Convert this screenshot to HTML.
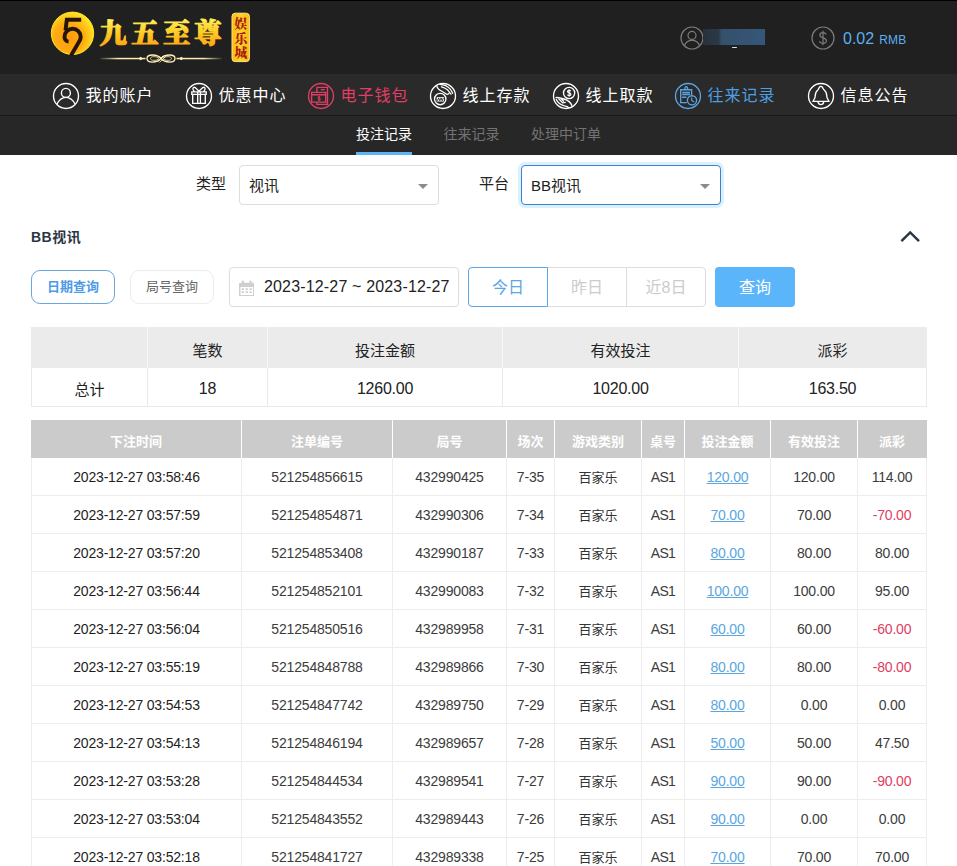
<!DOCTYPE html>
<html lang="zh-CN">
<head>
<meta charset="utf-8">
<title>投注记录</title>
<style>
*{box-sizing:border-box;margin:0;padding:0}
html,body{width:957px;height:866px;overflow:hidden;background:#fff}
body{position:relative;font-family:"Liberation Sans","Noto Sans CJK SC",sans-serif;color:#333;font-size:14px}
a{text-decoration:underline}
/* top bar */
.top{position:absolute;left:0;top:0;width:957px;height:74px;background:#202020;box-shadow:inset 0 1px 0 #000}
.logo{position:absolute;left:48px;top:7px;width:210px;height:60px}
.uicon{position:absolute;top:26px;width:24px;height:24px}
.mask{position:absolute;left:703px;top:29px;width:62px;height:16px;background:linear-gradient(90deg,#26313c 0,#2b3947 25%,#34506b 30%,#36577a 100%)}
.mask i{position:absolute;left:29px;top:17.5px;width:5px;height:1.5px;background:#cfe3f5;border-radius:1px}
.bal{position:absolute;left:843px;top:28px;height:22px;line-height:22px;color:#5bb0ee;font-size:16px;white-space:nowrap}
.bal small{font-size:12px;margin-left:5px;letter-spacing:.2px}
/* nav */
.nav{position:absolute;left:0;top:74px;width:957px;height:42px;background:#2a2a2a;border-bottom:1px solid #191919}
.ni{position:absolute;top:0;height:41px;line-height:41px;color:#fff;font-size:16px;white-space:nowrap}
.ni>svg{position:absolute;left:0;top:7.5px;width:28px;height:28px}
.ni span{position:absolute;left:33.5px;top:1px;width:72px;letter-spacing:1px}
.ni.red{color:#e03e66}
.ni.blue{color:#4d9fe0}
/* sub nav */
.sub{position:absolute;left:0;top:116px;width:957px;height:39px;background:#272727}
.tab{position:absolute;top:0;height:39px;line-height:37px;font-size:14px;color:#737373;text-align:center;white-space:nowrap}
.tab.on{color:#fff;border-bottom:3px solid #5ab4f5}
/* filters */
.lab{position:absolute;top:165px;height:39px;line-height:38px;font-size:15px;color:#222;white-space:nowrap}
.sel{position:absolute;top:165px;width:200px;height:40px;border:1px solid #ddd;border-radius:4px;background:#fff;line-height:39px;padding-left:9px;font-size:15px;color:#222;white-space:nowrap}
.sel i{position:absolute;right:10.5px;top:18px;width:0;height:0;border-left:5px solid transparent;border-right:5px solid transparent;border-top:5px solid #8c8c8c}
.sel.focus{border-color:#3f82cc;box-shadow:0 0 0 3px rgba(195,232,255,.6)}
.h3{position:absolute;left:31px;top:227px;height:20px;line-height:20px;font-size:14px;font-weight:bold;color:#2c3543;white-space:nowrap;letter-spacing:.5px}
.chev{position:absolute;left:899px;top:228px;width:22px;height:16px}
.pill{position:absolute;top:270px;height:34px;line-height:32px;width:84px;border:1px solid #ececec;border-radius:9px;text-align:center;font-size:13px;color:#666;background:#fff;white-space:nowrap}
.pill.on{border-color:#6aa5dc;color:#4d9be6;font-weight:bold}
.date{position:absolute;left:229px;top:267px;width:230px;height:40px;border:1px solid #ddd;border-radius:4px;background:#fff;line-height:38px;font-size:16px;color:#222;white-space:nowrap;letter-spacing:.16px}
.date svg{position:absolute;left:8.5px;top:11.5px;width:15.5px;height:16.4px}
.date span{position:absolute;left:34px;top:0}
.grp{position:absolute;top:267px;height:40px;border:1px solid #ddd;background:#fff;text-align:center;line-height:40px;font-size:16px;color:#ccc;white-space:nowrap}
.grp.on{border-color:#5aa6e6;color:#5aa6e6;z-index:2}
.qry{position:absolute;left:715px;top:267px;width:80px;height:40px;border-radius:4px;background:#5bb5fa;color:#fff;text-align:center;line-height:41px;font-size:16px;white-space:nowrap}
/* tables */
table{border-collapse:separate;border-spacing:0;table-layout:fixed;position:absolute;left:31px;width:896px}
th,td{text-align:center;vertical-align:middle;white-space:nowrap;padding:0}
.sum{top:327px}
.sum th{height:41px;padding-top:3px;background:#ebebeb;font-weight:normal;font-size:15px;color:#222;border-right:1px solid #f8f8f8}
.sum th:last-child{border-right:1px solid #ebebeb}
.sum td{height:39px;font-size:16px;letter-spacing:-.25px;color:#222;border-right:1px solid #e9e9e9;border-bottom:1px solid #e9e9e9}
.sum td:first-child{border-left:1px solid #e9e9e9}
.sum td{padding-top:3px}
.sum td.cj{font-size:15px;letter-spacing:0;padding-top:2px}
.det{top:420px}
.det th{height:38px;padding-top:2px;background:#cbcbcb;color:#fff;font-size:13px;font-weight:bold;border-right:1px solid #fff}
.det th:last-child{border-right:1px solid #cbcbcb}
.det td{height:38px;font-size:14px;color:#3c3c3c;border-right:1px solid #ededed;border-bottom:1px solid #ededed;letter-spacing:-.18px}
.det td:first-child{border-left:1px solid #ededed}
.det td.cj{font-size:13px;letter-spacing:0;color:#333}
.det td:first-child{color:#1e1e1e}
.det td.as{letter-spacing:-.7px}
.det td a{color:#5aa6e0}
.det td.neg{color:#e0405f}

</style>
</head>
<body>
<div class="top">
<svg class="logo" viewBox="0 0 210 60">
<defs>
<radialGradient id="gc" cx=".42" cy=".6" r=".62"><stop offset="0" stop-color="#ff9c0c"/><stop offset=".55" stop-color="#ffab12"/><stop offset=".85" stop-color="#ffd21c"/><stop offset="1" stop-color="#ffe926"/></radialGradient>
<linearGradient id="gt" x1="0" y1="0" x2="0" y2="1"><stop offset="0" stop-color="#fff05a"/><stop offset=".45" stop-color="#ffcc26"/><stop offset="1" stop-color="#ff9c0e"/></linearGradient>
<linearGradient id="gb" x1="0" y1="0" x2="1" y2="0"><stop offset="0" stop-color="#ffb914"/><stop offset=".5" stop-color="#ffd628"/><stop offset="1" stop-color="#ffb914"/></linearGradient>
<linearGradient id="gl" x1="0" y1="0" x2="1" y2="0"><stop offset="0" stop-color="#f6e6a0" stop-opacity=".1"/><stop offset=".15" stop-color="#fbeeb0"/><stop offset=".85" stop-color="#fbeeb0"/><stop offset="1" stop-color="#f6e6a0" stop-opacity=".1"/></linearGradient>
</defs>
<circle cx="24.5" cy="26.3" r="21.2" fill="url(#gc)" stroke="#ffe62a" stroke-width="1"/>
<path d="M33.2 12.7H18.8L17.5 23.6" fill="none" stroke="#24170a" stroke-width="3.9"/>
<path d="M20.6 34.6C17.6 34.4 16.5 31.8 16.5 29.9C16.5 25.4 20.1 21.8 24.6 21.8C29.1 21.8 32.7 25.4 32.7 29.9C32.7 31.6 32 33.1 31.3 34.2L23 48.4" fill="none" stroke="#24170a" stroke-width="3.9"/>
<g fill="url(#gt)" stroke="url(#gt)" stroke-width="1.2" stroke-linejoin="round" font-family="'Liberation Serif','Noto Serif CJK SC',serif" font-weight="900" font-size="27.3">
<text x="51.6" y="36">九</text>
<text x="83.3" y="36">五</text>
<text x="115" y="36">至</text>
<text x="146.3" y="36">尊</text>
</g>
<rect x="52" y="50.8" width="122" height="1.5" fill="url(#gl)"/>
<path d="M90.5 51.5l2.2-1.7 2.2 1.7-2.2 1.7zM135.5 51.5l-2.2-1.7-2.2 1.7 2.2 1.7z" fill="#fff0b4"/>
<rect x="97.5" y="46.5" width="31" height="10" fill="#202020"/>
<path d="M113 51.5C109 46.8 99 46.8 99 51.5C99 56.2 109 56.2 113 51.5C117 46.8 127 46.8 127 51.5C127 56.2 117 56.2 113 51.5Z" fill="none" stroke="#fff0b4" stroke-width="1.3"/>
<path d="M111 51.5C108.5 49 102.5 49 102.5 51.5C102.5 54 108.5 54 111 51.5M115 51.5C117.5 49 123.5 49 123.5 51.5C123.5 54 117.5 54 115 51.5M109.5 55L116.5 48M111.5 55.5L118.5 48.5" fill="none" stroke="#fff0b4" stroke-width=".8"/>
<rect x="184" y="6.2" width="17.4" height="48.4" rx="3.2" fill="url(#gb)" stroke="#ffe680" stroke-width="1"/>
<g fill="#a81a10" font-family="'Liberation Serif','Noto Serif CJK SC',serif" font-weight="900" font-size="12.8">
<text x="186.4" y="21.3">娱</text>
<text x="186.4" y="35.8">乐</text>
<text x="186.4" y="50.3">城</text>
</g>
</svg>
<svg class="uicon" style="left:680px" viewBox="0 0 24 24" fill="none" stroke="#7b7b7b" stroke-width="1.2"><circle cx="12" cy="12" r="11"/><circle cx="12" cy="9.4" r="4"/><path d="M4.4 19.8c1.4-4 4.2-5.4 7.6-5.4s6.2 1.4 7.6 5.4"/></svg>
<div class="mask"><i></i></div>
<svg class="uicon" style="left:811px" viewBox="0 0 24 24" fill="none" stroke="#7b7b7b" stroke-width="1.2"><circle cx="12" cy="12" r="11"/><path d="M15.2 8.6c-.6-1.4-1.8-2-3.2-2-1.8 0-3.2 1-3.2 2.6 0 3.4 6.6 1.8 6.6 5.4 0 1.7-1.5 2.8-3.4 2.8-1.7 0-3-.8-3.5-2.3M12 4.8v14.4"/></svg>
<div class="bal">0.02<small>RMB</small></div>
</div>
<div class="nav">
<div class="ni" style="left:52px"><svg viewBox="0 0 28 28" fill="none" stroke="#fff" stroke-width="1.35"><circle cx="14" cy="14" r="12.5"/><circle cx="13.9" cy="10.9" r="4.5"/><path d="M4.9 22.3C7 18 10 15.4 13.9 15.4C17.8 15.4 21 18 23.1 22.3"/></svg><span>我的账户</span></div>
<div class="ni" style="left:185px"><svg viewBox="0 0 28 28" fill="none" stroke="#fff" stroke-width="1.35"><circle cx="14" cy="14" r="12.5"/><path d="M6.8 9.8H21.2V12.4H6.8zM7.7 12.4V21.3H20.3V12.4M12.7 9.8V21.3M15.4 9.8V21.3M14 9.2L10.2 5.6C8.8 4.7 7.4 6 8.1 7.5L9.2 9.6M14 9.2L17.8 5.6C19.2 4.7 20.6 6 19.9 7.5L18.8 9.6"/></svg><span>优惠中心</span></div>
<div class="ni red" style="left:307px"><svg viewBox="0 0 28 28" fill="none" stroke="#e03e66" stroke-width="1.35"><circle cx="14" cy="14" r="12.5"/><path d="M9.9 10.4V5.4H20.5V22.4H9.9V20.1M13.8 7.6H17.8M4.6 10.4H18.7V20.1H4.6zM4.6 12.7H18.7"/><path d="M13.3 15.2c-.4-.7-2.4-.7-2.4.4 0 1.3 2.6.6 2.6 1.9 0 1.1-2.2 1.1-2.7.2M12.1 14v5" stroke-width="1"/></svg><span>电子钱包</span></div>
<div class="ni" style="left:429px"><svg viewBox="0 0 28 28" fill="none" stroke="#fff" stroke-width="1.35"><circle cx="14" cy="14" r="12.5"/><circle cx="11.2" cy="17" r="5.7"/><rect x="7.7" y="15.1" width="7.2" height="4.4" fill="#fff" stroke="none"/><path d="M8.4 18.8L9.6 15.9L10.8 18.8L12 15.9L13.2 18.8L14.3 15.9" stroke="#2a2a2a" stroke-width=".9"/><path d="M10.8 2.4C15 2.7 18.8 4.5 20.8 6.7C22.4 8.5 23.3 10.2 23.8 11.8M7.8 3.9C8 6 9.4 7.6 13.3 9.5L17.6 12.2C18.6 12.6 19.6 12.2 20.2 11L21 9.7M12 4.6C14.5 5.4 17.2 6.6 19 8.3L22.4 12.6" stroke-width="1.2"/></svg><span>线上存款</span></div>
<div class="ni" style="left:552px"><svg viewBox="0 0 28 28" fill="none" stroke="#fff" stroke-width="1.35"><circle cx="14" cy="14" r="12.5"/><circle cx="17.1" cy="11" r="5.6"/><path d="M18.7 9.3c-.5-1.3-3.2-1.2-3.2.3 0 1.8 3.4.9 3.4 2.8 0 1.6-3 1.7-3.6.2M17.1 7.3v7.4" stroke-width="1.2"/><path d="M3.5 15.7C6 15 9 16 12 17C15.5 18 18.5 19.5 20 23.7M4 17C5.5 20.2 8.5 23 12.5 23.8C14.5 24 15.8 24.4 17.2 26.2M6.5 16.6L10.6 20.8L13.8 20.3M8.8 16.4L12 19.4"/></svg><span>线上取款</span></div>
<div class="ni blue" style="left:674px"><svg viewBox="0 0 28 28" fill="none" stroke="#5aa5e3" stroke-width="1.35"><circle cx="14" cy="14" r="12.5"/><path d="M12.8 20.6H6.7V7.7H17.6V13.2M10.8 7.5C10.8 3.6 13.7 3.6 13.7 7.5M8.2 10.5H16M8.2 12.5H16M8.2 15.2H12.4"/><circle cx="18" cy="18.3" r="4.6"/><path d="M17.7 15.6V18.5L20.2 20.1" stroke-width="1.2"/></svg><span>往来记录</span></div>
<div class="ni" style="left:807px"><svg viewBox="0 0 28 28" fill="none" stroke="#fff" stroke-width="1.35"><circle cx="14" cy="14" r="12.5"/><path d="M6.1 19.3L8 15.5C8.4 13 8 10 10.6 8.2C11.8 7.2 12 6 12.4 5.2C13 4 14.8 4 15.4 5.2C15.8 6 16 7.2 17.4 8.2C20 10 19.6 13 20 15.5L21.9 19.3ZM11.1 19.5C11.1 23.7 16.7 23.7 16.7 19.5"/></svg><span>信息公告</span></div>
</div>
<div class="sub">
<div class="tab on" style="left:356px;width:56px">投注记录</div>
<div class="tab" style="left:443px;width:57px">往来记录</div>
<div class="tab" style="left:531px;width:70px">处理中订单</div>
</div>

<div class="lab" style="left:196px">类型</div>
<div class="sel" style="left:239px">视讯<i></i></div>
<div class="lab" style="left:479px">平台</div>
<div class="sel focus" style="left:521px">BB视讯<i></i></div>
<div class="h3">BB视讯</div>
<svg class="chev" viewBox="0 0 22 16" fill="none" stroke="#2c3543" stroke-width="2.5"><path d="M2.4 13.2L11.2 4.4L20 13.2"/></svg>
<div class="pill on" style="left:31px">日期查询</div>
<div class="pill" style="left:130px">局号查询</div>
<div class="date"><svg viewBox="0 0 17 18" fill="#cfcfcf"><path d="M1.5 3h14a1.5 1.5 0 0 1 1.5 1.5v12a1.5 1.5 0 0 1-1.5 1.5h-14A1.5 1.5 0 0 1 0 16.5v-12A1.5 1.5 0 0 1 1.5 3zM1.6 7.6v8.8h13.8V7.6z"/><rect x="3.2" y="0.5" width="2.2" height="4.6" rx="1"/><rect x="11.6" y="0.5" width="2.2" height="4.6" rx="1"/><path d="M3 9h2.4v2H3zM7.3 9h2.4v2H7.3zM11.6 9H14v2h-2.4zM3 12.4h2.4v2H3zM7.3 12.4h2.4v2H7.3zM11.6 12.4H14v2h-2.4z"/></svg><span>2023-12-27 ~ 2023-12-27</span></div>
<div class="grp on" style="left:468px;width:80px;border-radius:4px 0 0 4px">今日</div>
<div class="grp" style="left:547px;width:80px">昨日</div>
<div class="grp" style="left:626px;width:80px;border-radius:0 4px 4px 0">近8日</div>
<div class="qry">查询</div>
<table class="sum">
<colgroup><col style="width:117px"><col style="width:120px"><col style="width:235px"><col style="width:236px"><col style="width:188px"></colgroup>
<tr><th></th><th>笔数</th><th>投注金额</th><th>有效投注</th><th>派彩</th></tr>
<tr><td class="cj">总计</td><td>18</td><td>1260.00</td><td>1020.00</td><td>163.50</td></tr>
</table>
<table class="det">
<colgroup><col style="width:211px"><col style="width:151px"><col style="width:114px"><col style="width:48px"><col style="width:87px"><col style="width:43px"><col style="width:86px"><col style="width:87px"><col style="width:69px"></colgroup>
<tr><th>下注时间</th><th>注单编号</th><th>局号</th><th>场次</th><th>游戏类别</th><th>桌号</th><th>投注金额</th><th>有效投注</th><th>派彩</th></tr>
<tr><td>2023-12-27 03:58:46</td><td>521254856615</td><td>432990425</td><td>7-35</td><td class="cj">百家乐</td><td class="as">AS1</td><td><a>120.00</a></td><td>120.00</td><td>114.00</td></tr>
<tr><td>2023-12-27 03:57:59</td><td>521254854871</td><td>432990306</td><td>7-34</td><td class="cj">百家乐</td><td class="as">AS1</td><td><a>70.00</a></td><td>70.00</td><td class="neg">-70.00</td></tr>
<tr><td>2023-12-27 03:57:20</td><td>521254853408</td><td>432990187</td><td>7-33</td><td class="cj">百家乐</td><td class="as">AS1</td><td><a>80.00</a></td><td>80.00</td><td>80.00</td></tr>
<tr><td>2023-12-27 03:56:44</td><td>521254852101</td><td>432990083</td><td>7-32</td><td class="cj">百家乐</td><td class="as">AS1</td><td><a>100.00</a></td><td>100.00</td><td>95.00</td></tr>
<tr><td>2023-12-27 03:56:04</td><td>521254850516</td><td>432989958</td><td>7-31</td><td class="cj">百家乐</td><td class="as">AS1</td><td><a>60.00</a></td><td>60.00</td><td class="neg">-60.00</td></tr>
<tr><td>2023-12-27 03:55:19</td><td>521254848788</td><td>432989866</td><td>7-30</td><td class="cj">百家乐</td><td class="as">AS1</td><td><a>80.00</a></td><td>80.00</td><td class="neg">-80.00</td></tr>
<tr><td>2023-12-27 03:54:53</td><td>521254847742</td><td>432989750</td><td>7-29</td><td class="cj">百家乐</td><td class="as">AS1</td><td><a>80.00</a></td><td>0.00</td><td>0.00</td></tr>
<tr><td>2023-12-27 03:54:13</td><td>521254846194</td><td>432989657</td><td>7-28</td><td class="cj">百家乐</td><td class="as">AS1</td><td><a>50.00</a></td><td>50.00</td><td>47.50</td></tr>
<tr><td>2023-12-27 03:53:28</td><td>521254844534</td><td>432989541</td><td>7-27</td><td class="cj">百家乐</td><td class="as">AS1</td><td><a>90.00</a></td><td>90.00</td><td class="neg">-90.00</td></tr>
<tr><td>2023-12-27 03:53:04</td><td>521254843552</td><td>432989443</td><td>7-26</td><td class="cj">百家乐</td><td class="as">AS1</td><td><a>90.00</a></td><td>0.00</td><td>0.00</td></tr>
<tr><td>2023-12-27 03:52:18</td><td>521254841727</td><td>432989338</td><td>7-25</td><td class="cj">百家乐</td><td class="as">AS1</td><td><a>70.00</a></td><td>70.00</td><td>70.00</td></tr>
</table>

</body>
</html>
